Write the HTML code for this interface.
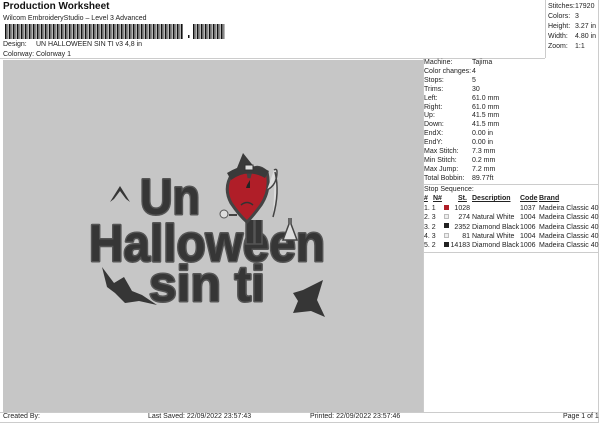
<html><head><style>
body{margin:0;width:600px;height:424px;background:#fff;font-family:"Liberation Sans",sans-serif;position:relative;overflow:hidden;color:#222}
.a{position:absolute;white-space:nowrap}
.s{font-size:7px}
.t{font-weight:bold;font-family:"Liberation Sans",sans-serif;fill:#363636;stroke:#555;stroke-width:3;stroke-linejoin:round;paint-order:stroke}
</style></head><body>
<div class="a" style="left:3px;top:1px;font-size:10px;font-weight:bold;color:#111">Production Worksheet</div>
<div class="a s" style="left:3px;top:15px">Wilcom EmbroideryStudio – Level 3 Advanced</div>
<svg class="a" style="left:5px;top:24px" width="220" height="16">
<rect x="0" y="0" width="178" height="15" fill="url(#bc)"/>
<rect x="183" y="11" width="1.5" height="3" fill="#111"/>
<rect x="188" y="0" width="34" height="15" fill="url(#bc)"/>
<defs><pattern id="bc" width="4" height="15" patternUnits="userSpaceOnUse"><rect width="1.6" height="15" fill="#111"/><rect x="2.5" width="0.8" height="15" fill="#111"/></pattern></defs>
</svg>
<div class="a s" style="left:3px;top:41px">Design:</div>
<div class="a s" style="left:36px;top:41px">UN HALLOWEEN SIN TI v3 4,8 in</div>
<div class="a s" style="left:3px;top:51px">Colorway:</div>
<div class="a s" style="left:36px;top:51px">Colorway 1</div>
<div class="a" style="left:0;top:58px;width:545px;border-top:1px solid #ccc"></div>
<div class="a" style="left:545px;top:0;height:58px;border-left:1px solid #ccc"></div>
<div class="a" style="left:598px;top:0;height:422px;border-left:1px solid #ccc"></div>
<div class="a s" style="left:548px;top:2px;line-height:10px">Stitches:<br>Colors:<br>Height:<br>Width:<br>Zoom:</div>
<div class="a s" style="left:575px;top:2px;line-height:10px">17920<br>3<br>3.27 in<br>4.80 in<br>1:1</div>
<div class="a" style="left:3px;top:60px;width:420px;height:352px;background:#c6c6c6"></div>
<svg class="a" style="left:3px;top:60px" width="420" height="352">
<text class="t" x="137" y="154" font-size="50" textLength="60" lengthAdjust="spacingAndGlyphs">Un</text>
<text class="t" x="86" y="201" font-size="52" textLength="236" lengthAdjust="spacingAndGlyphs">Halloween</text>
<text class="t" x="146" y="241" font-size="50" textLength="116" lengthAdjust="spacingAndGlyphs">sin ti</text>
<path d="M243 160 v24 h8 v-24 M252 160 v24 h7 v-24" fill="#363636" stroke="#555" stroke-width="1.5"/>
<path d="M229 114 Q244 100 246 118 Q250 100 264 112 Q268 130 258 145 Q250 156 244 162 Q236 155 228 143 Q220 128 229 114Z" fill="#b01e28" stroke="#444" stroke-width="3"/>
<path d="M224 113 Q244 100 266 111 L262 118 Q244 108 228 120Z" fill="#3a3a3a"/>
<path d="M240 93 L252 108 L234 108Z" fill="#3a3a3a"/>
<rect x="242" y="105" width="8" height="5" fill="#ddd" stroke="#333"/>
<path d="M238 145 Q244 140 250 145" fill="none" stroke="#333" stroke-width="1.5"/>
<path d="M244 125 l3 -5 v8 h-4z" fill="#222"/>
<path d="M264 130 q10 -5 10 -18 q0 -4 -3 -2 M272 112 q5 20 -2 45 M286 158 v6 l-6 16 h14 l-6 -16 v-6" fill="#ddd" stroke="#444" stroke-width="1.5"/>
<path d="M226 155 h8" stroke="#444" stroke-width="2"/>
<circle cx="221" cy="154" r="4" fill="#ddd" stroke="#555"/>
<path d="M107 142 l10 -16 l10 16 l-4 -3 l-6 -8 l-6 8Z" fill="#363636"/>
<path d="M99 207 l5 20 l8 6 l10 10 l14 -2 l18 4 l-15 -10 l-10 -4 l-8 -14 l-10 6Z" fill="#363636"/>
<path d="M300 230 l20 -10 l-6 20 l8 17 l-14 -6 l-18 2 l5 -12 l-5 -8Z" fill="#363636"/>
</svg>
<div class="a" style="left:423px;top:58px;height:354px;border-left:1px solid #ccc"></div>
<div class="a s" style="left:424px;top:59px;line-height:8.9px">Machine:<br>Color changes:<br>Stops:<br>Trims:<br>Left:<br>Right:<br>Up:<br>Down:<br>EndX:<br>EndY:<br>Max Stitch:<br>Min Stitch:<br>Max Jump:<br>Total Bobbin:</div>
<div class="a s" style="left:472px;top:59px;line-height:8.9px">Tajima<br>4<br>5<br>30<br>61.0 mm<br>61.0 mm<br>41.5 mm<br>41.5 mm<br>0.00 in<br>0.00 in<br>7.3 mm<br>0.2 mm<br>7.2 mm<br>89.77ft</div>
<div class="a" style="left:423px;top:184px;width:175px;border-top:1px solid #ccc"></div>
<div class="a s" style="left:424px;top:186px">Stop Sequence:</div>
<div class="a s" style="left:424px;top:195px;font-weight:bold;text-decoration:underline">#</div>
<div class="a s" style="left:433px;top:195px;font-weight:bold;text-decoration:underline">N#</div>
<div class="a s" style="left:458px;top:195px;font-weight:bold;text-decoration:underline">St.</div>
<div class="a s" style="left:472px;top:195px;font-weight:bold;text-decoration:underline">Description</div>
<div class="a s" style="left:520px;top:195px;font-weight:bold;text-decoration:underline">Code</div>
<div class="a s" style="left:539px;top:195px;font-weight:bold;text-decoration:underline">Brand</div>
<div class="a s" style="left:424px;top:204px;line-height:9.3px">1. 1<br>2. 3<br>3. 2<br>4. 3<br>5. 2</div>
<div class="a" style="left:444px;top:205px;width:5px;height:5px;background:#b01e28"></div>
<div class="a" style="left:444px;top:214px;width:5px;height:5px;background:#eee;border:1px solid #bbb;box-sizing:border-box"></div>
<div class="a" style="left:444px;top:223px;width:5px;height:5px;background:#222"></div>
<div class="a" style="left:444px;top:233px;width:5px;height:5px;background:#eee;border:1px solid #bbb;box-sizing:border-box"></div>
<div class="a" style="left:444px;top:242px;width:5px;height:5px;background:#222"></div>
<div class="a s" style="left:450px;top:204px;width:20px;text-align:right;line-height:9.3px">1028<br>274<br>2352<br>81<br>14183</div>
<div class="a s" style="left:472px;top:204px;line-height:9.3px"><br>Natural White<br>Diamond Black<br>Natural White<br>Diamond Black</div>
<div class="a s" style="left:520px;top:204px;line-height:9.3px">1037<br>1004<br>1006<br>1004<br>1006</div>
<div class="a s" style="left:539px;top:204px;line-height:9.3px">Madeira Classic 40<br>Madeira Classic 40<br>Madeira Classic 40<br>Madeira Classic 40<br>Madeira Classic 40</div>
<div class="a" style="left:423px;top:252px;width:175px;border-top:1px solid #ccc"></div>
<div class="a" style="left:0;top:412px;width:599px;height:9px;border-top:1px solid #ccc;border-bottom:1px solid #ccc"></div>
<div class="a s" style="left:3px;top:413px">Created By:</div>
<div class="a s" style="left:148px;top:413px">Last Saved: 22/09/2022 23:57:43</div>
<div class="a s" style="left:310px;top:413px">Printed: 22/09/2022 23:57:46</div>
<div class="a s" style="left:563px;top:413px">Page 1 of 1</div>
</body></html>
